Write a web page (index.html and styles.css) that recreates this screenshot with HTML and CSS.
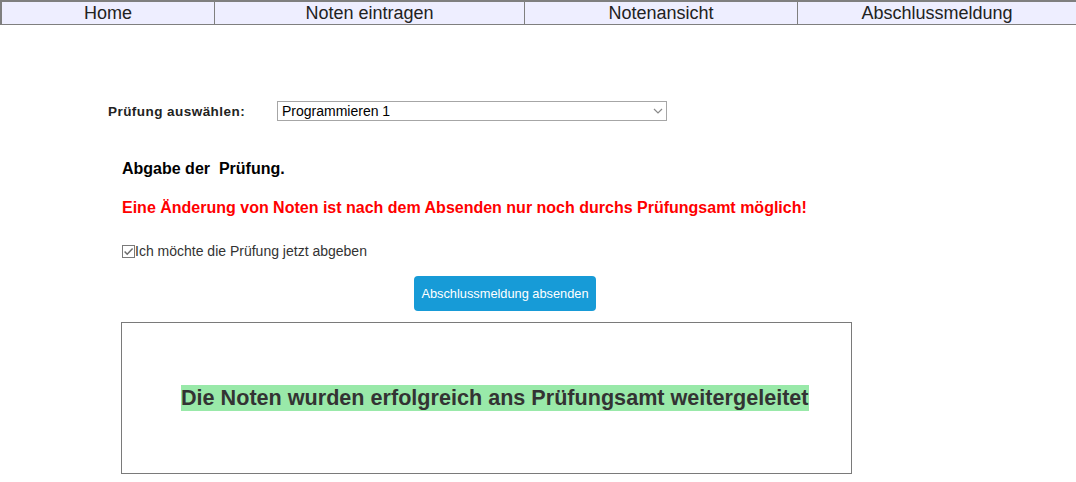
FILE: index.html
```html
<!DOCTYPE html>
<html lang="de">
<head>
<meta charset="utf-8">
<title>Abschlussmeldung</title>
<link rel="stylesheet" href="styles.css">
</head>
<body>
<nav class="nav">
  <a class="nav-item nav-home" href="#">Home</a>
  <a class="nav-item nav-enter" href="#">Noten eintragen</a>
  <a class="nav-item nav-view" href="#">Notenansicht</a>
  <a class="nav-item nav-final" href="#">Abschlussmeldung</a>
</nav>
<main class="main">
  <div class="exam-row">
    <label class="exam-label" for="exam">Prüfung auswählen:</label>
    <div class="select-wrap">
      <select id="exam" class="exam-select">
        <option>Programmieren 1</option>
      </select>
      <svg class="chevron" width="10" height="6" viewBox="0 0 10 6"><path d="M1 1 L5 5 L9 1" fill="none" stroke="#8a8a8a" stroke-width="1.2"/></svg>
    </div>
  </div>
  <section class="submit">
    <h3 class="title">Abgabe der&nbsp; Prüfung.</h3>
    <p class="warning">Eine Änderung von Noten ist nach dem Absenden nur noch durchs Prüfungsamt möglich!</p>
    <label class="confirm">
      <svg class="check" width="13" height="13" viewBox="0 0 13 13"><rect x="0.5" y="0.5" width="12" height="12" fill="#fff" stroke="#7a7a7a"/><path d="M2.6 6.4 L5.2 9.2 L10.6 3.4" fill="none" stroke="#6e6e6e" stroke-width="1.5"/></svg>
      <span>Ich möchte die Prüfung jetzt abgeben</span>
    </label>
    <div class="btn-row">
      <button class="btn" type="button">Abschlussmeldung absenden</button>
    </div>
    <div class="result">
      <span class="result-text">Die Noten wurden erfolgreich ans Prüfungsamt weitergeleitet</span>
    </div>
  </section>
</main>
</body>
</html>
```
FILE: styles.css
```css
* { box-sizing: border-box; }
body {
  margin: 0;
  font-family: "Liberation Sans", Arial, sans-serif;
  background: #fff;
  color: #000;
}
.nav {
  display: flex;
  height: 25px;
  background: #eeeeff;
  border-top: 2px solid #7f7f7f;
  border-left: 2px solid #7f7f7f;
  border-bottom: 1px solid #7f7f7f;
}
.nav-item {
  display: flex;
  align-items: center;
  justify-content: center;
  font-size: 18px;
  color: #222;
  text-decoration: none;
  border-right: 1px solid #7f7f7f;
  line-height: 22px;
}
.nav-home { width: 213px; }
.nav-enter { width: 310px; }
.nav-view { width: 273px; }
.nav-final { flex: 1; border-right: none; }

.main {
  padding: 76px 0 0 108px;
}
.exam-row {
  display: flex;
  align-items: center;
}
.exam-label {
  width: 169px;
  font-size: 13.5px;
  font-weight: bold;
  color: #222;
  letter-spacing: 0.45px;
}
.select-wrap {
  position: relative;
  width: 390px;
  height: 20px;
}
.exam-select {
  appearance: none;
  -webkit-appearance: none;
  width: 100%;
  height: 20px;
  border: 1px solid #a6a6a6;
  border-radius: 0;
  background: #fff;
  font-family: "Liberation Sans", Arial, sans-serif;
  font-size: 14px;
  color: #000;
  padding: 0 0 0 4px;
  margin: 0;
}
.chevron {
  position: absolute;
  right: 4px;
  top: 7px;
}
.submit {
  padding: 39px 0 0 14px;
}
.title {
  margin: 0;
  font-size: 16px;
  font-weight: bold;
  line-height: 18px;
}
.warning {
  margin: 21px 0 0;
  font-size: 16px;
  font-weight: bold;
  line-height: 18px;
  color: #ff0000;
}
.confirm {
  display: flex;
  align-items: center;
  margin-top: 26px;
  font-size: 14px;
  color: #333;
  line-height: 16px;
}
.check { display: block; }
.btn-row {
  display: flex;
  padding-left: 292px;
  margin-top: 17px;
}
.btn {
  width: 182px;
  height: 35px;
  border: none;
  border-radius: 4px;
  background: #179bd7;
  color: #fff;
  font-family: "Liberation Sans", Arial, sans-serif;
  font-size: 12.8px;
  padding: 0;
}
.result {
  margin: 11px 0 0 -1px;
  width: 731px;
  height: 152px;
  border: 1px solid #7a7a7a;
  display: flex;
  align-items: center;
  padding-left: 59px;
}
.result-text {
  background: #99e9a9;
  color: #333;
  font-size: 21.6px;
  font-weight: bold;
  line-height: 26px;
}
```
